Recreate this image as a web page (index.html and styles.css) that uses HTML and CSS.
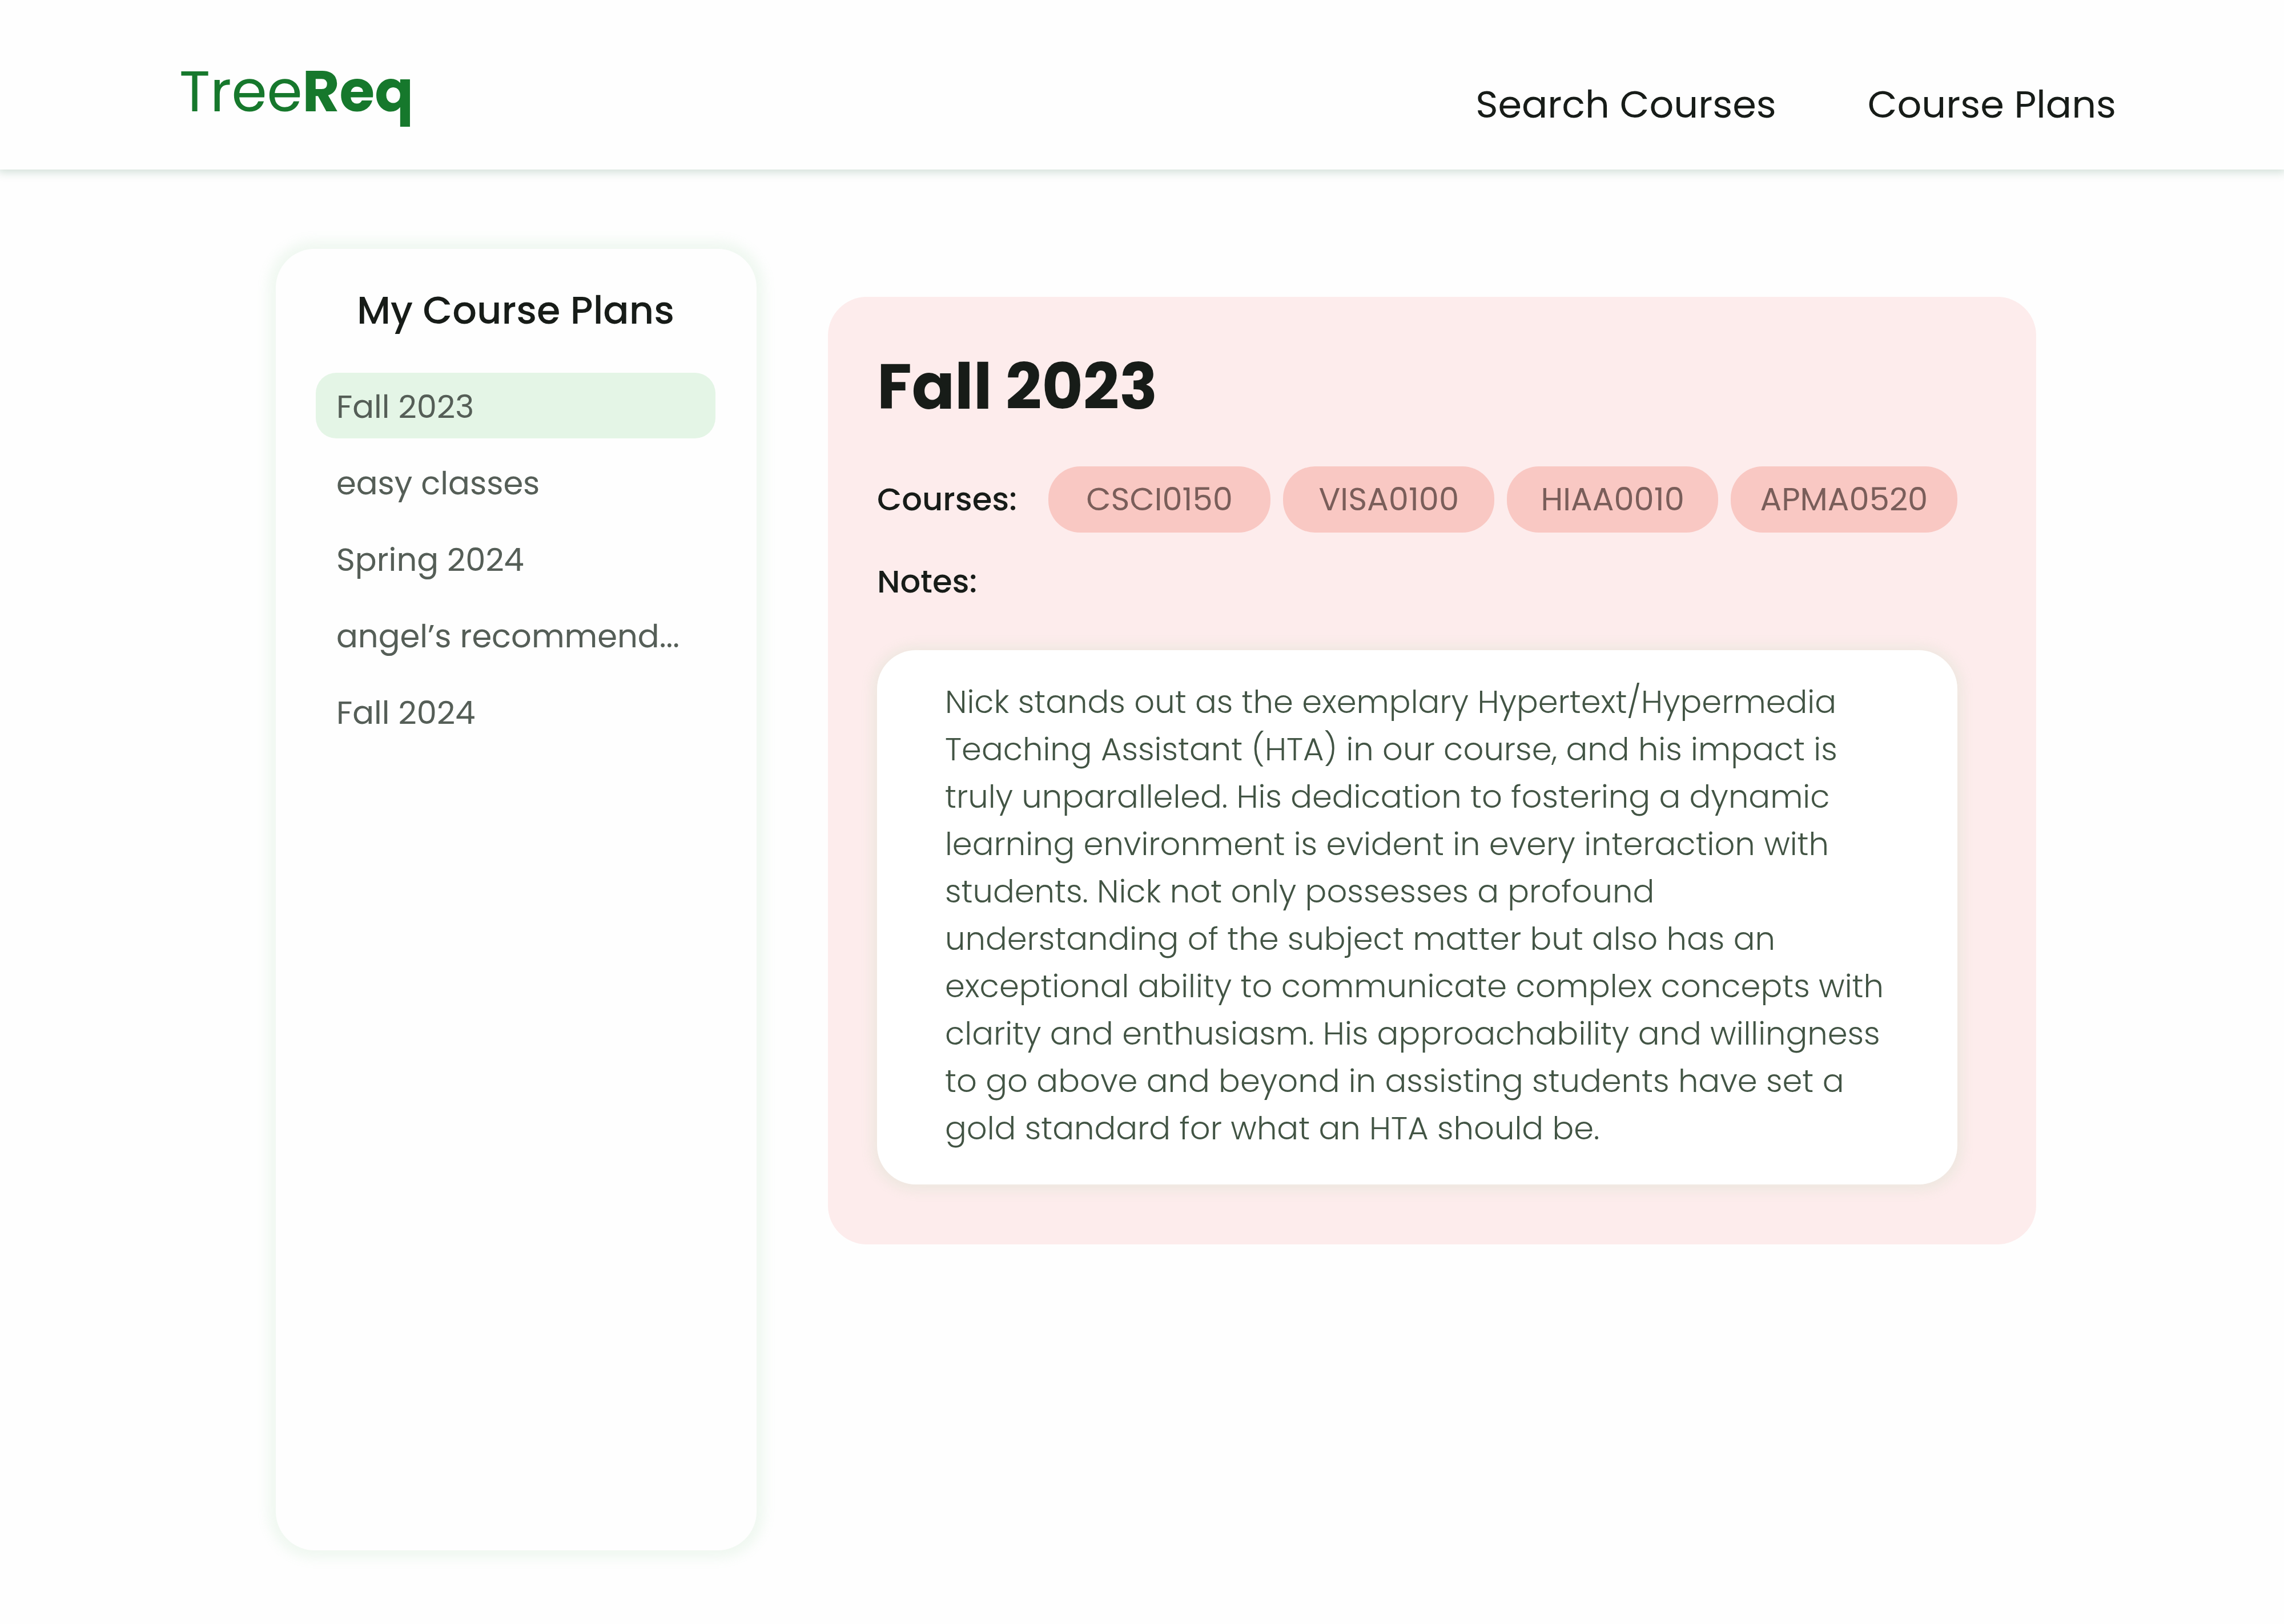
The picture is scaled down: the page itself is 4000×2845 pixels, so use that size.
FILE: index.html
```html
<!DOCTYPE html>
<html lang="en">
<head>
<meta charset="utf-8">
<meta name="viewport" content="width=device-width, initial-scale=1">
<title>TreeReq</title>
<link rel="stylesheet" href="styles.css">
</head>
<body>
<header class="site-header">
  <a class="logo" href="#">Tree<strong>Req</strong></a>
  <nav class="site-nav">
    <a href="#search">Search Courses</a>
    <a href="#plans">Course Plans</a>
  </nav>
</header>
<main class="page">
  <aside class="sidebar">
    <h2 class="sidebar-title">My Course Plans</h2>
    <ul class="plan-list">
      <li><a class="plan plan-active" href="#fall-2023" aria-current="page">Fall 2023</a></li>
      <li><a class="plan" href="#easy">easy classes</a></li>
      <li><a class="plan" href="#spring-2024">Spring 2024</a></li>
      <li><a class="plan" href="#angel">angel’s recommend...</a></li>
      <li><a class="plan" href="#fall-2024">Fall 2024</a></li>
    </ul>
  </aside>
  <article class="card">
    <h1 class="card-title">Fall 2023</h1>
    <section class="courses">
      <h3 class="label">Courses:</h3>
      <ul class="chips">
        <li class="chip">CSCI0150</li>
        <li class="chip">VISA0100</li>
        <li class="chip">HIAA0010</li>
        <li class="chip">APMA0520</li>
      </ul>
    </section>
    <section class="notes">
      <h3 class="label">Notes:</h3>
      <p class="notes-text">Nick stands out as the exemplary Hypertext/Hypermedia<br>
Teaching Assistant (HTA) in our course, and his impact is<br>
truly unparalleled. His dedication to fostering a dynamic<br>
learning environment is evident in every interaction with<br>
students. Nick not only possesses a profound<br>
understanding of the subject matter but also has an<br>
exceptional ability to communicate complex concepts with<br>
clarity and enthusiasm. His approachability and willingness<br>
to go above and beyond in assisting students have set a<br>
gold standard for what an HTA should be.</p>
    </section>
  </article>
</main>
</body>
</html>
```
FILE: styles.css
```css
* {
  box-sizing: border-box;
  margin: 0;
  padding: 0;
}

:root {
  --ink: #171c18;
  --paper: #fefefe;
  --glow: rgba(137, 205, 150, 0.12);
}

body {
  min-height: 100vh;
  display: flex;
  flex-direction: column;
  background: var(--paper);
  color: var(--ink);
  font-family: Poppins, Inter, "Liberation Sans", sans-serif;
}

a {
  color: inherit;
  text-decoration: none;
}

ul {
  list-style: none;
}

/* Header */
.site-header {
  display: flex;
  justify-content: space-between;
  align-items: flex-end;
  padding: 97px 294px 74px 314px;
  background: var(--paper);
  box-shadow: 0 0 16px 4px rgba(10, 84, 44, 0.2);
}

.logo {
  color: #16782c;
  font-size: 100px;
  line-height: 126px;
}

.site-nav {
  display: flex;
  gap: 160px;
  font-size: 67px;
  line-height: 80px;
}

/* Layout */
.page {
  flex: 1;
  display: flex;
  align-items: flex-start;
  gap: 125px;
  padding: 139px 434px 129px 483px;
}

/* Sidebar */
.sidebar {
  align-self: stretch;
  flex: 0 0 842px;
  padding: 68px 72px 68px 70px;
  border-radius: 68px;
  background: var(--paper);
  box-shadow: 0 0 20px 14px var(--glow);
}

.sidebar-title {
  margin-bottom: 69px;
  font-size: 67px;
  font-weight: 500;
  line-height: 80px;
  text-align: center;
}

.plan-list {
  display: grid;
  gap: 19px;
}

.plan {
  display: block;
  padding: 5px 36px 0;
  border-radius: 36px;
  color: #555e57;
  font-size: 56px;
  line-height: 110px;
  white-space: nowrap;
}

.plan-active {
  background: #e4f5e6;
}

/* Plan card */
.card {
  flex: 1;
  margin-top: 84px;
  padding: 97px 138px 105px 86px;
  border-radius: 68px;
  background: #fdecec;
}

.card-title {
  margin-bottom: 80px;
  font-size: 111px;
  font-weight: 700;
  line-height: 120px;
}

.courses {
  display: grid;
  grid-template-columns: 300px 1fr;
  align-items: center;
  margin-bottom: 46px;
}

.label {
  font-size: 56px;
  font-weight: 500;
  line-height: 80px;
}

.chips {
  display: grid;
  grid-template-columns: 389fr 370fr 369fr 397fr;
  gap: 22px;
}

.chip {
  border-radius: 56px;
  background: #f9c8c3;
  color: #7a5e5a;
  font-size: 56px;
  line-height: 116px;
  text-align: center;
}

.notes-text {
  margin-top: 80px;
  padding: 49px 119px 57px;
  border-radius: 68px;
  background: #fff;
  box-shadow: 0 2px 20px 10px var(--glow);
  color: #425444;
  font-size: 56px;
  font-weight: 300;
  line-height: 83px;
}
```
